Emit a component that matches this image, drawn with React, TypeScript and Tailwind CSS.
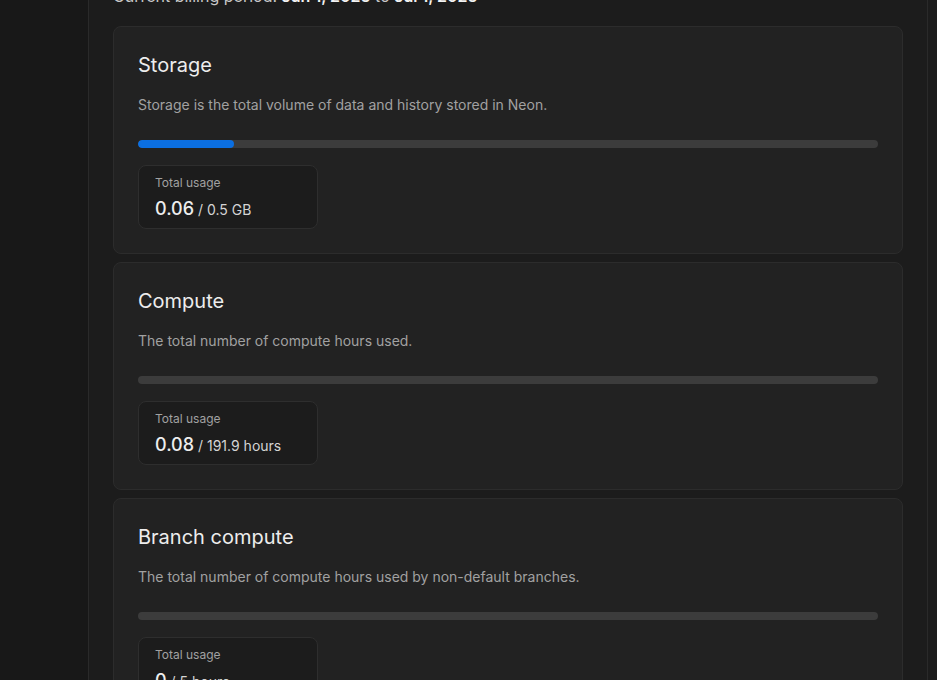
const usage = [
  {
    title: "Storage",
    description: "Storage is the total volume of data and history stored in Neon.",
    used: "0.06",
    limit: "0.5 GB",
    pct: 13,
  },
  {
    title: "Compute",
    description: "The total number of compute hours used.",
    used: "0.08",
    limit: "191.9 hours",
    pct: 0,
  },
  {
    title: "Branch compute",
    description: "The total number of compute hours used by non-default branches.",
    used: "0",
    limit: "5 hours",
    pct: 0,
  },
]

function UsageCard({ item }: { item: (typeof usage)[number] }) {
  return (
    <section className="rounded-lg border border-[#2c2c2c] bg-[#222222] px-6 pt-6 pb-6">
      <h2 className="text-xl leading-7 font-normal text-[#ededed]">{item.title}</h2>
      <p className="mt-4 text-sm leading-5 text-[#a1a1a1]">{item.description}</p>
      <div className="mt-[25px] h-2 w-full overflow-hidden rounded-full bg-[#3c3c3c]">
        <div className="h-full rounded-full bg-[#0b6fe2]" style={{ width: `${item.pct}%` }} />
      </div>
      <div className="mt-[17px] flex h-16 w-[180px] flex-col rounded-lg border border-[#2e2e2e] bg-[#1c1c1c] px-4 pt-[9px]">
        <span className="text-xs leading-4 text-[#a1a1a1]">Total usage</span>
        <span className="mt-1 leading-6 text-[#ededed]">
          <span className="text-lg font-medium">{item.used}</span>
          <span className="text-sm text-[#d4d4d4]"> / {item.limit}</span>
        </span>
      </div>
    </section>
  )
}

export default function App() {
  return (
    <div className="flex min-h-screen bg-[#1c1c1c] font-['Inter',sans-serif] antialiased">
      <aside className="w-[89px] shrink-0 border-r border-[#2a2a2a] bg-[#181818]" />
      <main className="w-[839px] shrink-0 border-r border-[#2a2a2a] px-6">
        <p className="-mt-[16px] text-base leading-6 text-[#c8c8c8]">
          Current billing period: <span className="font-semibold text-[#f2f2f2]">Jun 1, 2025</span> to{" "}
          <span className="font-semibold text-[#f2f2f2]">Jul 1, 2025</span>
        </p>
        <div className="mt-[18px] flex flex-col gap-2 pb-6">
          {usage.map((item) => (
            <UsageCard key={item.title} item={item} />
          ))}
        </div>
      </main>
      <div className="flex-1" />
    </div>
  )
}
